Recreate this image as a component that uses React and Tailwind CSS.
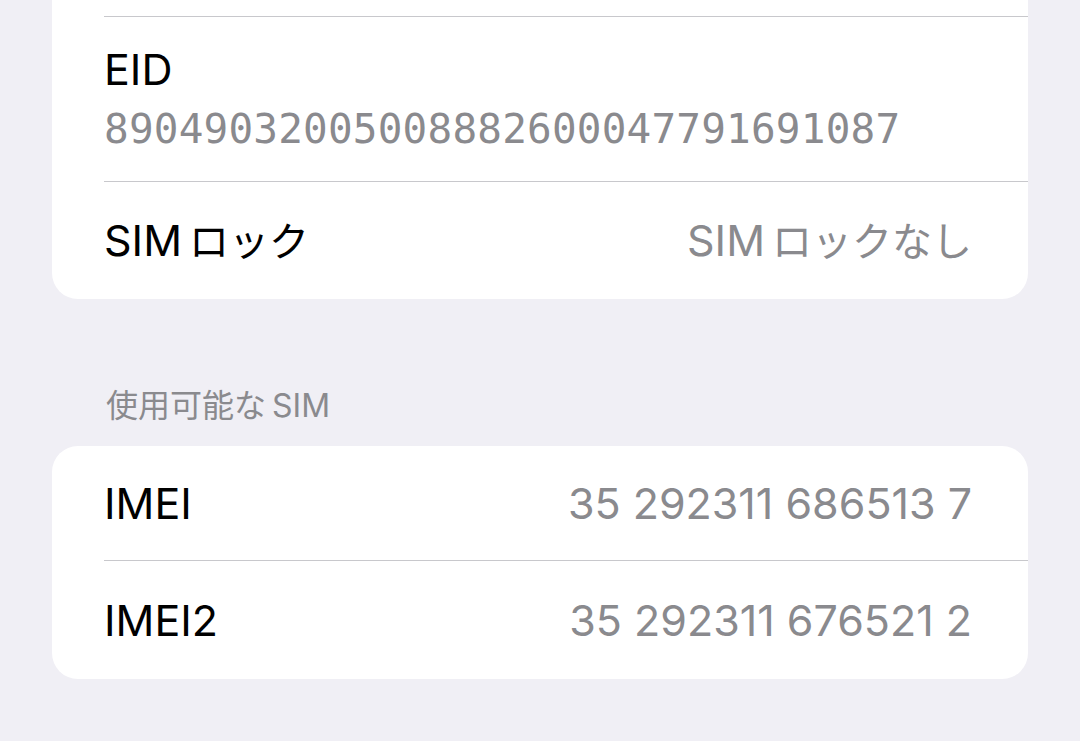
import React from 'react';

const sans = 'font-["Inter","Noto_Sans_CJK_JP",sans-serif]';

// "SIM" followed by kana, with the little gap iOS puts between scripts
const SimText = ({ rest, size = 'text-[40px]', gap = 'ml-[7px]' }) => (
  <>
    SIM<span className={`${gap} ${size}`}>{rest}</span>
  </>
);

export default function App() {
  return (
    <div className={`min-h-screen bg-[#f0eff5] px-[52px] ${sans}`}>
      {/* device card, scrolled so the top is hidden */}
      <div className="bg-white rounded-b-[26px]">
        <div className="h-[17px] ml-[52px] border-b border-[#c8c8cc]" />
        <div className="ml-[52px] h-[165px] border-b border-[#c8c8cc] pt-[26px]">
          <div className="text-[43px] leading-[52px] text-black">EID</div>
          <div className='font-["DejaVu_Sans_Mono",monospace] text-[41px] leading-[52px] text-[#8a8a8e] mt-[8px] tracking-[0.2px]'>
            89049032005008882600047791691087
          </div>
        </div>
        <div className="ml-[52px] h-[117px] flex items-center justify-between pr-[56px]">
          <span className="text-[43px] text-black">
            <SimText rest="ロック" />
          </span>
          <span className="text-[43px] text-[#8a8a8e]">
            <SimText rest="ロックなし" />
          </span>
        </div>
      </div>

      <div className="h-[147px] flex items-end pb-[16px] pl-[54px]">
        <span className="text-[32px] text-[#8a8a8e]">
          使用可能な<span className="ml-[6px]">SIM</span>
        </span>
      </div>

      <div className="bg-white rounded-[26px] overflow-hidden">
        <div className="h-[115px] ml-[52px] flex items-center justify-between pr-[56px] border-b border-[#c8c8cc]">
          <span className="text-[43px] text-black">IMEI</span>
          <span className="text-[43px] text-[#8a8a8e]">35 292311 686513 7</span>
        </div>
        <div className="h-[118px] ml-[52px] flex items-center justify-between pr-[56px]">
          <span className="text-[43px] text-black">IMEI2</span>
          <span className="text-[43px] text-[#8a8a8e]">35 292311 676521 2</span>
        </div>
      </div>
    </div>
  );
}
